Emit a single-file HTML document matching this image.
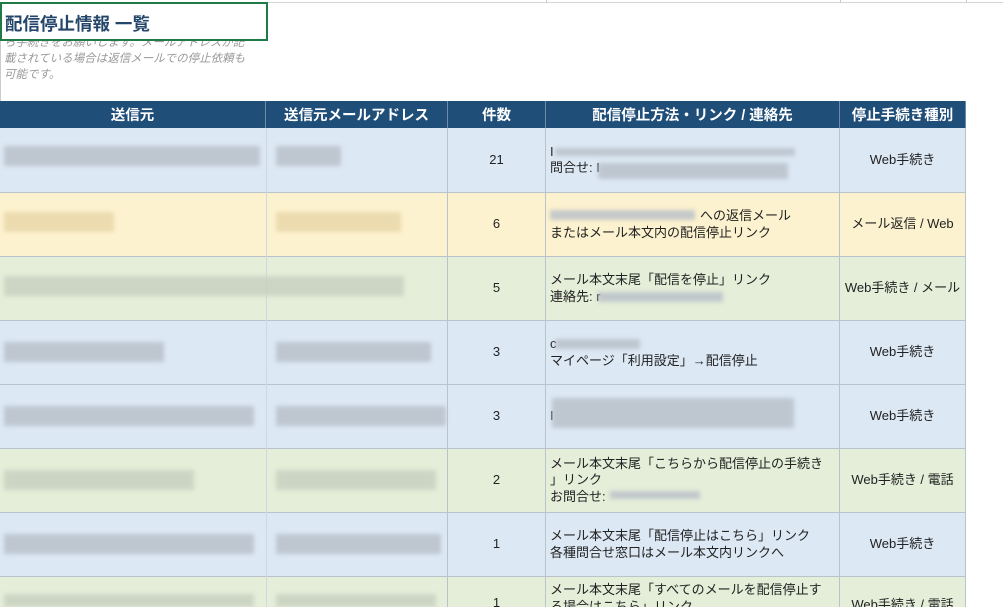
<!DOCTYPE html>
<html><head><meta charset="utf-8"><style>
*{margin:0;padding:0;box-sizing:border-box}
html,body{width:1003px;height:607px;overflow:hidden}
body{background:#fff;font-family:"Liberation Sans","Noto Sans CJK JP",sans-serif;position:relative;color:#222}
.a{position:absolute}
.hd{position:absolute;top:101px;height:27px;background:#1f4e79;color:#fff;font-weight:bold;font-size:14.5px;display:flex;align-items:center;justify-content:center;border-right:1px solid #6b8aa8}
.c{position:absolute;border-right:1px solid #b9c3cc;border-bottom:1px solid #b9c3cc;font-size:13px;display:flex;align-items:center;justify-content:center;line-height:16.5px;overflow:hidden}
.l{justify-content:flex-start;padding-left:4px}
.t{align-items:flex-start}
.b{position:absolute;background:#b7bfc8;filter:blur(2px);opacity:.8}
</style></head><body>
<div class="a" style="left:0;top:0;width:1003px;height:3px;border-bottom:1px solid #d5d5d5"></div>
<div class="a" style="left:546px;top:0;width:1px;height:3px;background:#ccc"></div>
<div class="a" style="left:840px;top:0;width:1px;height:3px;background:#ccc"></div>
<div class="a" style="left:966px;top:0;width:1px;height:3px;background:#ccc"></div>
<div class="a" style="left:4px;top:35px;font-size:11.5px;line-height:16px;color:#999;font-style:italic;width:262px">ら手続きをお願いします。メールアドレスが記<br>載されている場合は返信メールでの停止依頼も<br>可能です。</div>
<div class="a" style="left:0;top:2px;width:268px;height:39px;border:2px solid #1e7a46;background:#fff;font-weight:bold;font-size:17.5px;color:#24466a;padding:7px 0 0 3px">配信停止情報 一覧</div>
<div class="a" style="left:0;top:41px;width:1px;height:566px;background:#ccc"></div>
<div class="hd" style="left:0;width:266px">送信元</div>
<div class="hd" style="left:266px;width:182px">送信元メールアドレス</div>
<div class="hd" style="left:448px;width:98px">件数</div>
<div class="hd" style="left:546px;width:294px">配信停止方法・リンク / 連絡先</div>
<div class="hd" style="left:840px;width:126px">停止手続き種別</div>

<div class="c" style="left:0;top:128px;width:448px;height:65px;background:#dce8f4"></div>
<div class="c" style="left:448px;top:128px;width:98px;height:65px;background:#dce8f4">21</div>
<div class="c l" style="left:546px;top:128px;width:294px;height:65px;background:#dce8f4">I<br>問合せ: I</div>
<div class="c" style="left:840px;top:128px;width:126px;height:65px;background:#dce8f4">Web手続き</div>

<div class="c" style="left:0;top:193px;width:448px;height:64px;background:#fdf2cf"></div>
<div class="c" style="left:448px;top:193px;width:98px;height:64px;background:#fdf2cf">6</div>
<div class="c l" style="left:546px;top:193px;width:294px;height:64px;background:#fdf2cf"><span><span style="padding-left:150px">への返信メール</span><br>またはメール本文内の配信停止リンク</span></div>
<div class="c" style="left:840px;top:193px;width:126px;height:64px;background:#fdf2cf">メール返信 / Web</div>

<div class="c" style="left:0;top:257px;width:448px;height:64px;background:#e4eed9"></div>
<div class="c" style="left:448px;top:257px;width:98px;height:64px;background:#e4eed9">5</div>
<div class="c l" style="left:546px;top:257px;width:294px;height:64px;background:#e4eed9">メール本文末尾「配信を停止」リンク<br>連絡先: r</div>
<div class="c" style="left:840px;top:257px;width:126px;height:64px;background:#e4eed9;white-space:nowrap">Web手続き / メール</div>

<div class="c" style="left:0;top:321px;width:448px;height:64px;background:#dce8f4"></div>
<div class="c" style="left:448px;top:321px;width:98px;height:64px;background:#dce8f4">3</div>
<div class="c l" style="left:546px;top:321px;width:294px;height:64px;background:#dce8f4">c<br>マイページ「利用設定」→配信停止</div>
<div class="c" style="left:840px;top:321px;width:126px;height:64px;background:#dce8f4">Web手続き</div>

<div class="c" style="left:0;top:385px;width:448px;height:64px;background:#dce8f4"></div>
<div class="c" style="left:448px;top:385px;width:98px;height:64px;background:#dce8f4">3</div>
<div class="c l" style="left:546px;top:385px;width:294px;height:64px;background:#dce8f4">I</div>
<div class="c" style="left:840px;top:385px;width:126px;height:64px;background:#dce8f4">Web手続き</div>

<div class="c" style="left:0;top:449px;width:448px;height:64px;background:#e4eed9"></div>
<div class="c" style="left:448px;top:449px;width:98px;height:64px;background:#e4eed9">2</div>
<div class="c l" style="left:546px;top:449px;width:294px;height:64px;background:#e4eed9">メール本文末尾「こちらから配信停止の手続き<br>」リンク<br>お問合せ: </div>
<div class="c" style="left:840px;top:449px;width:126px;height:64px;background:#e4eed9">Web手続き / 電話</div>

<div class="c" style="left:0;top:513px;width:448px;height:64px;background:#dce8f4"></div>
<div class="c" style="left:448px;top:513px;width:98px;height:64px;background:#dce8f4">1</div>
<div class="c l" style="left:546px;top:513px;width:294px;height:64px;background:#dce8f4">メール本文末尾「配信停止はこちら」リンク<br>各種問合せ窓口はメール本文内リンクへ</div>
<div class="c" style="left:840px;top:513px;width:126px;height:64px;background:#dce8f4">Web手続き</div>

<div class="c t" style="left:0;top:577px;width:448px;height:30px;background:#e4eed9;border-bottom:none"></div>
<div class="c t" style="left:448px;top:577px;width:98px;height:30px;background:#e4eed9;border-bottom:none;padding-top:18px">1</div>
<div class="c l t" style="left:546px;top:577px;width:294px;height:30px;background:#e4eed9;border-bottom:none;padding-top:5px">メール本文末尾「すべてのメールを配信停止す<br>る場合はこちら」リンク</div>
<div class="c t" style="left:840px;top:577px;width:126px;height:30px;background:#e4eed9;border-bottom:none;padding-top:20px">Web手続き / 電話</div>

<div class="a" style="left:266px;top:128px;width:1px;height:479px;background:#cfd8e0"></div>

<div class="b" style="left:4px;top:146px;width:256px;height:20px"></div>
<div class="b" style="left:276px;top:146px;width:65px;height:20px"></div>
<div class="b" style="left:555px;top:148px;width:240px;height:8px"></div>
<div class="b" style="left:598px;top:163px;width:190px;height:16px"></div>
<div class="b" style="left:4px;top:212px;width:110px;height:20px;background:#e8d6a8"></div>
<div class="b" style="left:276px;top:212px;width:125px;height:20px;background:#e8d6a8"></div>
<div class="b" style="left:550px;top:210px;width:145px;height:10px"></div>
<div class="b" style="left:4px;top:276px;width:400px;height:20px;background:#c7d0c0"></div>
<div class="b" style="left:598px;top:292px;width:125px;height:10px"></div>
<div class="b" style="left:4px;top:342px;width:160px;height:20px"></div>
<div class="b" style="left:276px;top:342px;width:155px;height:20px"></div>
<div class="b" style="left:555px;top:339px;width:85px;height:10px"></div>
<div class="b" style="left:4px;top:406px;width:250px;height:20px"></div>
<div class="b" style="left:276px;top:406px;width:170px;height:20px"></div>
<div class="b" style="left:552px;top:398px;width:242px;height:30px"></div>
<div class="b" style="left:4px;top:470px;width:190px;height:20px;background:#c7d0c0"></div>
<div class="b" style="left:276px;top:470px;width:160px;height:20px;background:#c7d0c0"></div>
<div class="b" style="left:610px;top:491px;width:90px;height:8px"></div>
<div class="b" style="left:4px;top:534px;width:250px;height:20px"></div>
<div class="b" style="left:276px;top:534px;width:165px;height:20px"></div>
<div class="b" style="left:4px;top:594px;width:250px;height:13px;background:#c7d0c0"></div>
<div class="b" style="left:276px;top:594px;width:160px;height:13px;background:#c7d0c0"></div>
</body></html>
